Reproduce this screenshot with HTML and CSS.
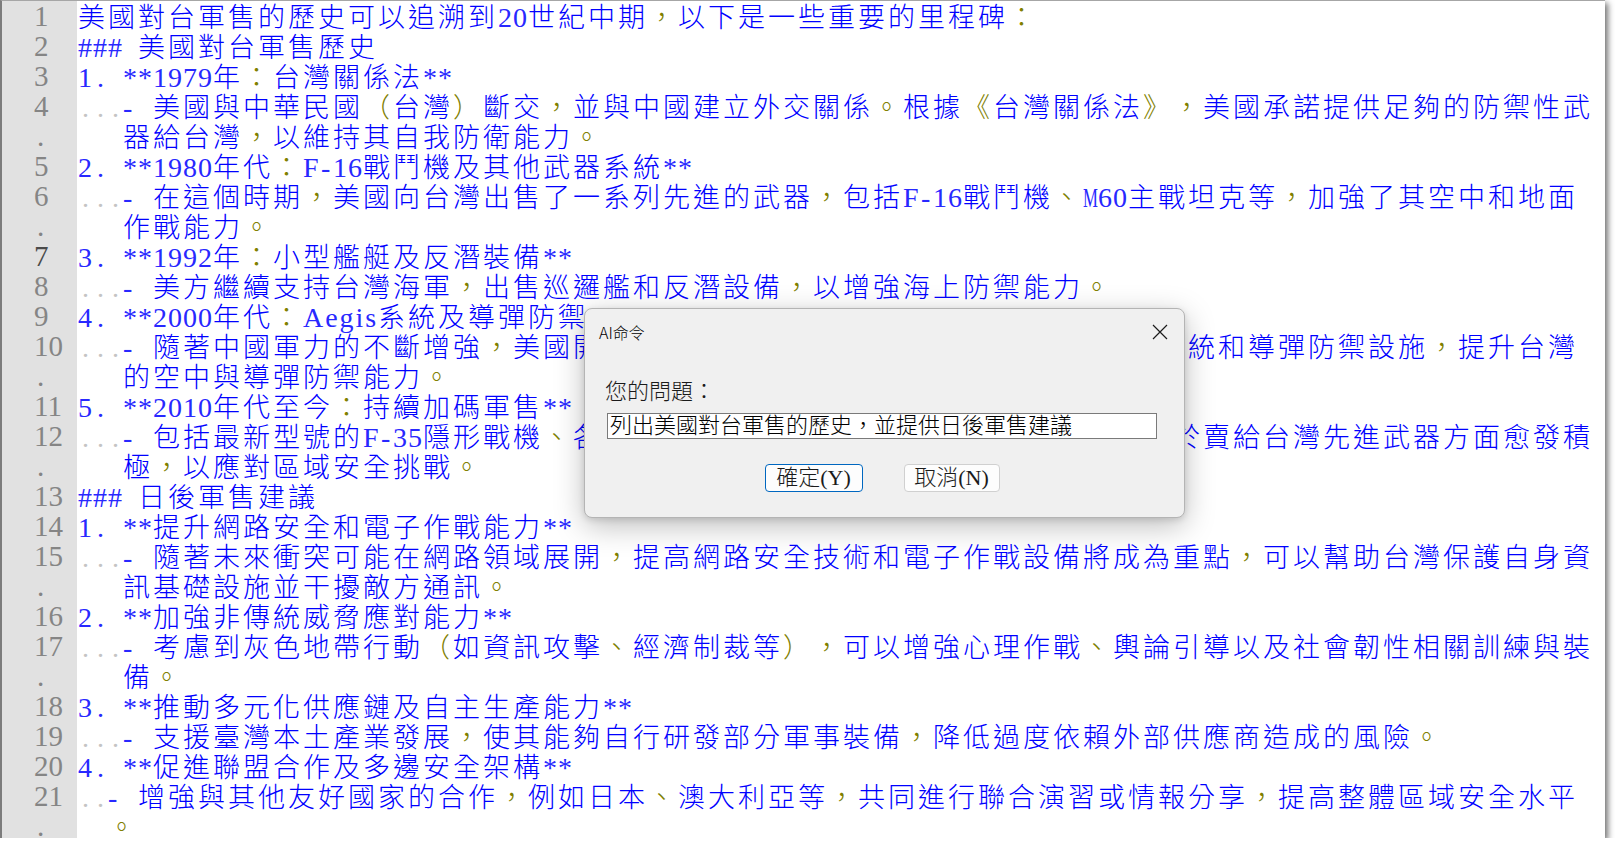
FILE: index.html
```html
<!DOCTYPE html>
<html lang="zh-Hant">
<head>
    <meta charset="UTF-8">
    <title>AI命令</title>
    <link rel="stylesheet" href="styles.css">
</head>
<body>
<div class="window">
    <!-- Line numbers -->
    <div class="gutter">
        <div class="ln">1</div>
        <div class="ln">2</div>
        <div class="ln">3</div>
        <div class="ln">4</div>
        <div class="ln cont">.</div>
        <div class="ln">5</div>
        <div class="ln">6</div>
        <div class="ln cont">.</div>
        <div class="ln current">7</div>
        <div class="ln">8</div>
        <div class="ln">9</div>
        <div class="ln">10</div>
        <div class="ln cont">.</div>
        <div class="ln">11</div>
        <div class="ln">12</div>
        <div class="ln cont">.</div>
        <div class="ln">13</div>
        <div class="ln">14</div>
        <div class="ln">15</div>
        <div class="ln cont">.</div>
        <div class="ln">16</div>
        <div class="ln">17</div>
        <div class="ln cont">.</div>
        <div class="ln">18</div>
        <div class="ln">19</div>
        <div class="ln">20</div>
        <div class="ln">21</div>
        <div class="ln cont">.</div>
    </div>

    <!-- Text -->
    <div class="code">
        <div class="row">美國對台軍售的歷史可以追溯到<span class="a">20</span>世紀中期<span class="p">，</span>以下是一些重要的里程碑<span class="p">：</span></div>
        <div class="row"><span class="a">###</span><span class="a w"> </span>美國對台軍售歷史</div>
        <div class="row"><span class="a">1</span><span class="a w">. </span><span class="a">**1979</span>年<span class="p">：</span>台灣關係法<span class="a">**</span></div>
        <div class="row"><span class="a d">...</span><span class="a dash">- </span>美國與中華民國<span class="p">（</span>台灣<span class="p">）</span>斷交<span class="p">，</span>並與中國建立外交關係<span class="p">。</span>根據<span class="p">《</span>台灣關係法<span class="p">》，</span>美國承諾提供足夠的防禦性武</div>
        <div class="row i3">器給台灣<span class="p">，</span>以維持其自我防衛能力<span class="p">。</span></div>
        <div class="row"><span class="a">2</span><span class="a w">. </span><span class="a">**1980</span>年代<span class="p">：</span><span class="a f">F-</span><span class="a">16</span>戰鬥機及其他武器系統<span class="a">**</span></div>
        <div class="row"><span class="a d">...</span><span class="a dash">- </span>在這個時期<span class="p">，</span>美國向台灣出售了一系列先進的武器<span class="p">，</span>包括<span class="a f">F-</span><span class="a">16</span>戰鬥機<span class="p">、</span><span class="a m">M</span><span class="a">60</span>主戰坦克等<span class="p">，</span>加強了其空中和地面</div>
        <div class="row i3">作戰能力<span class="p">。</span></div>
        <div class="row"><span class="a">3</span><span class="a w">. </span><span class="a">**1992</span>年<span class="p">：</span>小型艦艇及反潛裝備<span class="a">**</span></div>
        <div class="row"><span class="a d">...</span><span class="a dash">- </span>美方繼續支持台灣海軍<span class="p">，</span>出售巡邏艦和反潛設備<span class="p">，</span>以增強海上防禦能力<span class="p">。</span></div>
        <div class="row"><span class="a">4</span><span class="a w">. </span><span class="a">**2000</span>年代<span class="p">：</span><span class="a ae">Aegis</span>系統及導彈防禦<span class="a">**</span></div>
        <div class="row"><span class="a d">...</span><span class="a dash">- </span>隨著中國軍力的不斷增強<span class="p">，</span>美國開始向台灣出售更先進的防空武器<span class="p">，</span>如<span class="a ae">Aegis</span>系統和導彈防禦設施<span class="p">，</span>提升台灣</div>
        <div class="row i3">的空中與導彈防禦能力<span class="p">。</span></div>
        <div class="row"><span class="a">5</span><span class="a w">. </span><span class="a">**2010</span>年代至今<span class="p">：</span>持續加碼軍售<span class="a">**</span></div>
        <div class="row"><span class="a d">...</span><span class="a dash">- </span>包括最新型號的<span class="a f">F-</span><span class="a">35</span>隱形戰機<span class="p">、</span>各類飛彈及無人機系統等<span class="p">，</span>顯示近年來美國對於賣給台灣先進武器方面愈發積</div>
        <div class="row i3">極<span class="p">，</span>以應對區域安全挑戰<span class="p">。</span></div>
        <div class="row"><span class="a">###</span><span class="a w"> </span>日後軍售建議</div>
        <div class="row"><span class="a">1</span><span class="a w">. </span><span class="a">**</span>提升網路安全和電子作戰能力<span class="a">**</span></div>
        <div class="row"><span class="a d">...</span><span class="a dash">- </span>隨著未來衝突可能在網路領域展開<span class="p">，</span>提高網路安全技術和電子作戰設備將成為重點<span class="p">，</span>可以幫助台灣保護自身資</div>
        <div class="row i3">訊基礎設施並干擾敵方通訊<span class="p">。</span></div>
        <div class="row"><span class="a">2</span><span class="a w">. </span><span class="a">**</span>加強非傳統威脅應對能力<span class="a">**</span></div>
        <div class="row"><span class="a d">...</span><span class="a dash">- </span>考慮到灰色地帶行動<span class="p">（</span>如資訊攻擊<span class="p">、</span>經濟制裁等<span class="p">），</span>可以增強心理作戰<span class="p">、</span>輿論引導以及社會韌性相關訓練與裝</div>
        <div class="row i3">備<span class="p">。</span></div>
        <div class="row"><span class="a">3</span><span class="a w">. </span><span class="a">**</span>推動多元化供應鏈及自主生產能力<span class="a">**</span></div>
        <div class="row"><span class="a d">...</span><span class="a dash">- </span>支援臺灣本土產業發展<span class="p">，</span>使其能夠自行研發部分軍事裝備<span class="p">，</span>降低過度依賴外部供應商造成的風險<span class="p">。</span></div>
        <div class="row"><span class="a">4</span><span class="a w">. </span><span class="a">**</span>促進聯盟合作及多邊安全架構<span class="a">**</span></div>
        <div class="row"><span class="a d">..</span><span class="a dash">- </span>增強與其他友好國家的合作<span class="p">，</span>例如日本<span class="p">、</span>澳大利亞等<span class="p">，</span>共同進行聯合演習或情報分享<span class="p">，</span>提高整體區域安全水平</div>
        <div class="row i2"><span class="p">。</span></div>
    </div>

    <!-- AI prompt dialog -->
    <div class="dialog">
        <div class="dialog-title">
            <span>AI命令</span>
            <svg class="close" width="16" height="16" viewBox="0 0 16 16">
                <path d="M1 1 L15 15 M15 1 L1 15" stroke="#1b1b1b" stroke-width="1.2" fill="none"/>
            </svg>
        </div>
        <div class="dialog-body">
            <div class="prompt-label">您的問題：</div>
            <div class="prompt-input">列出美國對台軍售的歷史，並提供日後軍售建議</div>
            <div class="buttons">
                <button class="btn btn-default">確定(Y)</button>
                <button class="btn">取消(N)</button>
            </div>
        </div>
    </div>
</div>
</body>
</html>
```

FILE: styles.css
```css
:root {
    --text-blue: #0000ff;
    --latin-blue: #2828ff;
    --punct: #808000;
    --gutter-bg: #e1e1e1;
    --gutter-text: #858585;
    --dots: #c4c4c4;
    --dialog-bg: #f0f0f0;
}

body {
    margin: 0;
    background: #fff;
    overflow: hidden;
}

/* Editor window */
.window {
    position: relative;
    display: flex;
    width: 1603px;
    height: 837px;
    border-top: 1px solid #a6a6a6;
    border-left: 2px solid #7c7c7c;
    background: #fff;
    box-shadow: 3px 3px 6px rgba(0, 0, 0, 0.55);
    overflow: hidden;
}

.gutter {
    width: 75px;
    flex-shrink: 0;
    background: var(--gutter-bg);
}

.ln {
    height: 30px;
    line-height: 30px;
    padding-left: 32px;
    font-family: "Liberation Serif", serif;
    font-size: 29px;
    color: var(--gutter-text);
}

.ln.cont {
    padding-left: 35px;
}

.ln.current {
    color: #4a4a4a;
}

.code {
    flex: 1;
    padding-left: 1px;
}

.row {
    height: 30px;
    line-height: 30px;
    white-space: pre;
    font-family: "Noto Sans CJK TC", sans-serif;
    font-weight: 300;
    font-size: 27px;
    letter-spacing: 3px;
    text-spacing-trim: space-all;
    color: var(--text-blue);
}

.row.i3 {
    padding-left: 45px;
}

.row.i2 {
    padding-left: 30px;
}

/* half-width runs: every cell is 15px wide (digits, # and * are 0.5em + 1px) */
.a {
    font-family: "Liberation Serif", serif;
    font-weight: 400;
    font-size: 28px;
    letter-spacing: 1px;
    color: var(--latin-blue);
}

/* periods, spaces */
.a.w, .a.d {
    padding-left: 4px;
    margin-right: -4px;
    letter-spacing: 8px;
}

.a.d {
    color: var(--dots);
}

.a.dash {
    letter-spacing: 6.83px;
}

.a.f {
    letter-spacing: 2.55px;
}

.a.ae {
    letter-spacing: 1.94px;
}

.a.m {
    display: inline-block;
    width: 15px;
    letter-spacing: 0;
    transform: scaleX(0.6);
    transform-origin: 0 50%;
}

.p {
    color: var(--punct);
}

/* Dialog */
.dialog {
    position: absolute;
    left: 582px;
    top: 307px;
    width: 599px;
    height: 208px;
    display: flex;
    flex-direction: column;
    background: var(--dialog-bg);
    border: 1px solid #b4b4b4;
    border-radius: 8px;
    box-shadow: 0 8px 30px rgba(0, 0, 0, 0.26), 0 2px 6px rgba(0, 0, 0, 0.12);
}

.dialog-title {
    height: 46px;
    display: flex;
    align-items: center;
    justify-content: space-between;
    padding: 0 16px 0 14px;
    font-family: "Noto Sans CJK TC", sans-serif;
    font-weight: 300;
    font-size: 16px;
    color: #000;
}

.dialog-body {
    display: flex;
    flex-direction: column;
    padding: 0 27px 0 20px;
    font-family: "Liberation Serif", "Noto Sans CJK TC", serif;
    font-size: 22px;
    font-weight: 300;
    color: #1a1a1a;
    text-spacing-trim: space-all;
}

.prompt-label {
    margin-top: 24px;
    height: 26px;
    line-height: 26px;
}

.prompt-input {
    margin-top: 8px;
    margin-left: 2px;
    height: 24px;
    line-height: 24px;
    padding: 0 2px;
    background: #fff;
    border: 1px solid #7a7a7a;
    color: #000;
}

.buttons {
    display: flex;
    justify-content: center;
    gap: 41px;
    margin-top: 25px;
    padding-left: 2px;
}

.btn {
    height: 28px;
    width: 96px;
    padding: 0;
    background: #fdfdfd;
    border: 1px solid #d0d0d0;
    border-radius: 4px;
    font: inherit;
    line-height: 24px;
    color: #1a1a1a;
}

.btn-default {
    width: 98px;
    border-color: #0067c0;
}
```
